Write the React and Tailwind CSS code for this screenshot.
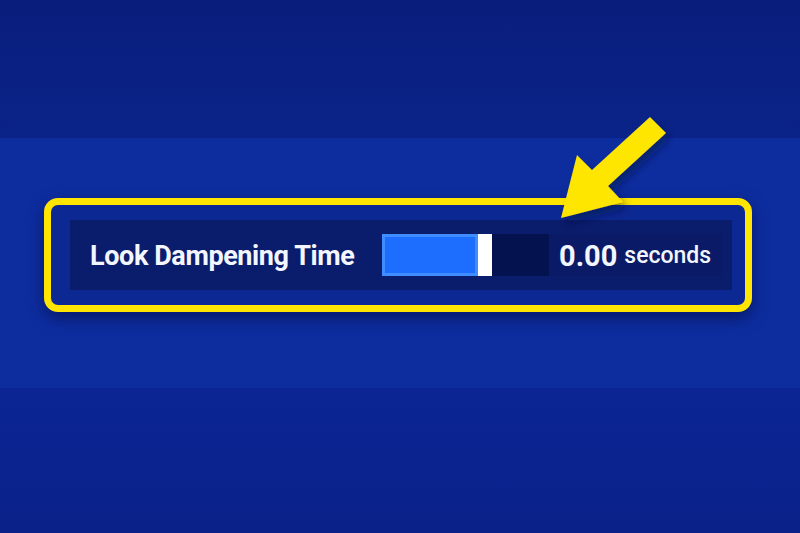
import { useState } from 'react';

// Settings row: label, slider with thumb, and value readout
function SliderRow({ label, value, unit, fill }) {
  return (
    <div className="flex h-[70px] items-center bg-[#0a1c6c]">
      <div className="w-[312px] pl-[20px] pt-[3px] text-[27px] font-bold tracking-[-0.4px] text-[#f3f6ff]">
        {label}
      </div>
      <div className="flex h-[42px] w-[167px]">
        <div
          className="h-full border-[3px] border-[#3f8dff] bg-[#1d6dff]"
          style={{ width: fill }}
        />
        <div className="h-full w-[14px] bg-white" />
        <div className="h-full flex-1 bg-[#04134f]" />
      </div>
      <div className="flex h-[42px] w-[173px] items-center bg-[#0a1a66] pl-[10px] pt-[3px] text-[#f3f6ff]">
        <span className="text-[29px] font-bold">{value}</span>
        <span className="ml-[7px] text-[23px] font-medium">{unit}</span>
      </div>
    </div>
  );
}

function Arrow() {
  return (
    <svg className="absolute left-0 top-0" width="800" height="533" viewBox="0 0 800 533">
      <defs>
        <filter id="arrow-shadow" x="-20%" y="-20%" width="140%" height="140%">
          <feDropShadow dx="4" dy="6" stdDeviation="4" floodColor="#020a3a" floodOpacity="0.5" />
        </filter>
      </defs>
      <polygon
        points="650,117 666,133 608,186 623,202 561,218 577,155 592,170"
        fill="#ffe600"
        filter="url(#arrow-shadow)"
      />
    </svg>
  );
}

export default function App() {
  const [fill] = useState(96);

  return (
    <div
      className="relative flex h-[533px] w-[800px] flex-col overflow-hidden bg-[#0a2082]"
      style={{ fontFamily: 'Roboto, "Noto Sans", sans-serif' }}
    >
      <div className="h-[138px] bg-gradient-to-b from-[#091d7c] to-[#0b2489]" />
      <div className="h-[250px] bg-[#0d2d9f] pt-[60px] shadow-[0_0_12px_#0a2388]">
        <div className="ml-[44px] h-[114px] w-[708px] rounded-[14px] border-[7px] border-[#ffe500] bg-[#0c2892] pl-[19px] pr-[13px] pt-[15px] shadow-[0_6px_16px_rgba(2,10,60,0.55)]">
          <SliderRow label="Look Dampening Time" value="0.00" unit="seconds" fill={fill} />
        </div>
      </div>
      <div className="flex-1 bg-gradient-to-b from-[#0b2594] to-[#0a2189]" />
      <Arrow />
    </div>
  );
}
